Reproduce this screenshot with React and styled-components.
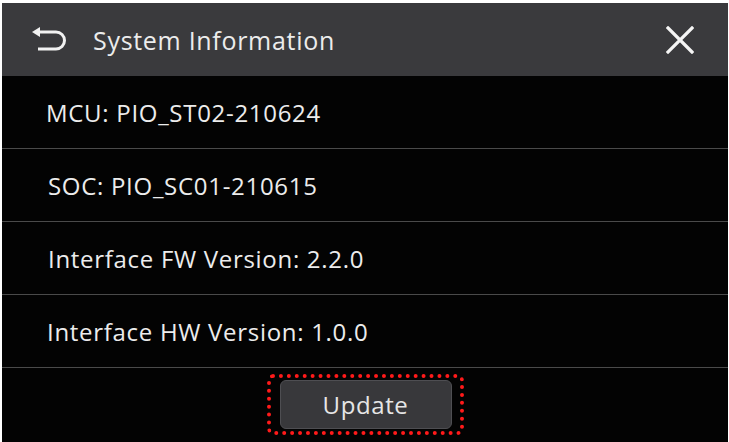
import React from "react"
import styled, { createGlobalStyle } from "styled-components"

const GlobalStyle = createGlobalStyle`
    html, body {
        margin: 0;
        padding: 0;
        background: #ffffff;
    }
    body {
        font-family: "Open Sans", "Noto Sans", sans-serif;
    }
`

const Frame = styled.div`
    width: 729px;
    height: 442px;
    padding: 3px 1px 0 2px;
    box-sizing: border-box;
    background: #ffffff;
`

const Screen = styled.div`
    height: 100%;
    background: #030303;
    display: flex;
    flex-direction: column;
`

const Header = styled.div`
    height: 73px;
    background: #3a3a3d;
    display: flex;
    align-items: center;
    padding: 0 0 0 30px;
    flex-shrink: 0;
`

const Title = styled.h1`
    margin: 0 0 0 27px;
    font-size: 25px;
    font-weight: 400;
    color: #ececec;
    flex: 1;
    letter-spacing: 0.7px;
`

const IconButton = styled.button`
    border: none;
    background: none;
    padding: 0;
    display: flex;
    align-items: center;
    justify-content: center;
    cursor: pointer;
    width: ${p => p.size}px;
    height: ${p => p.size}px;
    margin-right: ${p => p.right || 0}px;
`

const List = styled.div`
    display: flex;
    flex-direction: column;
`

const Row = styled.div`
    height: 72px;
    border-bottom: 1px solid #4a4a4a;
    display: flex;
    align-items: center;
    padding-left: ${p => p.indent}px;
    font-size: 24px;
    letter-spacing: 0.7px;
    color: #ececec;
`

const Footer = styled.div`
    flex: 1;
    display: flex;
    justify-content: center;
    padding-top: 6px;
`

const Focus = styled.div`
    border: 4px dotted #ff1a1a;
    border-radius: 6px;
    padding: 2px 8px 2px 9px;
    box-sizing: border-box;
    width: 197px;
    height: 61px;
`

const UpdateButton = styled.button`
    width: 172px;
    height: 49px;
    background: #38383b;
    border: 1px solid #4e4e52;
    border-radius: 6px;
    color: #e6e6e6;
    font-family: "Open Sans", "Noto Sans", sans-serif;
    font-size: 24px;
    letter-spacing: 0.6px;
    cursor: pointer;
    padding: 0;
`

const BackIcon = () => (
    <svg width="34" height="26" viewBox="0 0 34 26">
        <path d="M0 5 L8 0 L8 10 Z" fill="#f2f2f2" />
        <path d="M7 5 H24 A8.5 8.5 0 0 1 24 22 H6" fill="none" stroke="#f2f2f2" strokeWidth="3" />
    </svg>
)

const CloseIcon = () => (
    <svg width="28" height="28" viewBox="0 0 28 28">
        <path d="M2 2 L26 26 M26 2 L2 26" stroke="#f5f5f5" strokeWidth="3.2" strokeLinecap="square" />
    </svg>
)

const rows = [
    { label: "MCU: PIO_ST02-210624", indent: 44 },
    { label: "SOC: PIO_SC01-210615", indent: 46 },
    { label: "Interface FW Version: 2.2.0", indent: 46 },
    { label: "Interface HW Version: 1.0.0", indent: 45 },
]

const App = () => {
    return (
        <Frame>
            <GlobalStyle />
            <Screen>
                <Header>
                    <IconButton size={34}>
                        <BackIcon />
                    </IconButton>
                    <Title>System Information</Title>
                    <IconButton size={28} right={34}>
                        <CloseIcon />
                    </IconButton>
                </Header>
                <List>
                    {rows.map(r => (
                        <Row key={r.label} indent={r.indent}>{r.label}</Row>
                    ))}
                </List>
                <Footer>
                    <Focus>
                        <UpdateButton>Update</UpdateButton>
                    </Focus>
                </Footer>
            </Screen>
        </Frame>
    )
}

export default App
